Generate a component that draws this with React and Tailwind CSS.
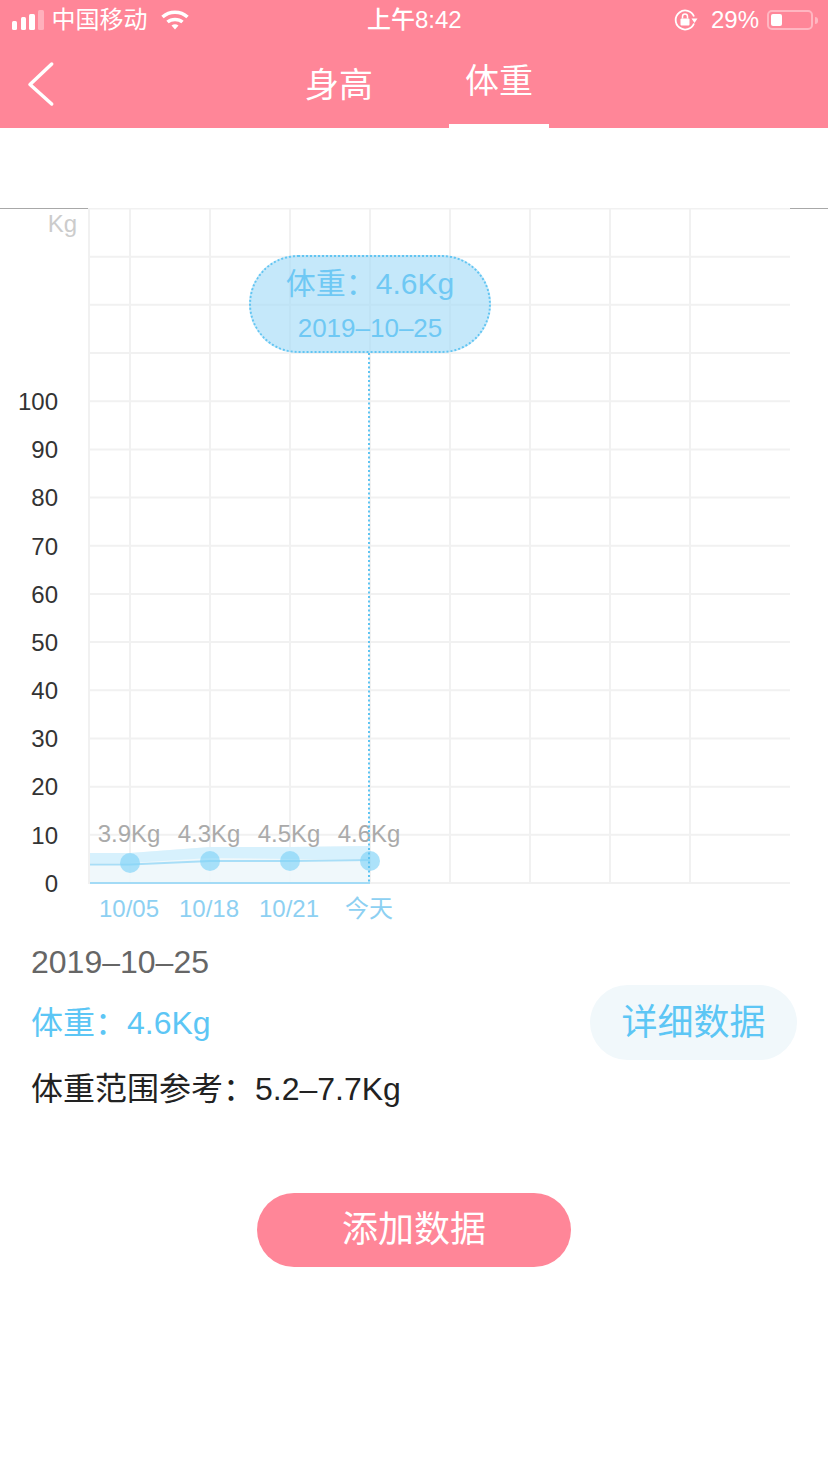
import React from "react";

const yLabels = [100, 90, 80, 70, 60, 50, 40, 30, 20, 10, 0];
const gridY = Array.from({ length: 15 }, (_, i) => 208.5 + i * 48.18);
const gridX = [130, 210, 290, 370, 450, 530, 610, 690];

const points = [
  { x: 130, y: 863, value: "3.9Kg", date: "10/05" },
  { x: 210, y: 861, value: "4.3Kg", date: "10/18" },
  { x: 290, y: 861, value: "4.5Kg", date: "10/21" },
  { x: 370, y: 861, value: "4.6Kg", date: "今天" },
];

const StatusBar = () => {
  return (
    <div className="flex h-10 items-center text-white">
      <div className="flex w-[367px] items-center">
        <div className="ml-3 flex h-5 items-end gap-[3.5px]">
          <div className="h-[9px] w-[5px] rounded-[1.5px] bg-white"></div>
          <div className="h-[13px] w-[5px] rounded-[1.5px] bg-white"></div>
          <div className="h-4 w-[5.5px] rounded-[1.5px] bg-white"></div>
          <div className="h-5 w-[5.5px] rounded-[1.5px] bg-white/35"></div>
        </div>
        <span className="ml-2 text-[24px] leading-none">中国移动</span>
        <svg className="ml-[13px]" width="28" height="20" viewBox="0 0 28 20" fill="none">
          <path d="M1.5 7C8.5 .5 19.5 .5 26.5 7" stroke="white" strokeWidth="3.5" />
          <path d="M6.5 12C10.5 8.5 17.5 8.5 21.5 12" stroke="white" strokeWidth="3.5" />
          <path d="M10.5 15.5Q14 13 17.5 15.5L14 19.5Z" fill="white" />
        </svg>
      </div>
      <span className="w-[103px] text-[24px] leading-none font-medium whitespace-nowrap">上午8:42</span>
      <div className="flex flex-1 items-center justify-end pr-[10px]">
        <svg width="24" height="24" viewBox="0 0 24 24" fill="none">
          <path d="M20 8.5A9.5 9.5 0 1 0 20 15.5" stroke="white" strokeWidth="1.8" />
          <path d="M17.5 10.5H23.5L20.5 15Z" fill="white" />
          <rect x="6.5" y="10.5" width="9" height="7" rx="1" fill="white" />
          <path d="M8.5 10.5V8.5A2.5 2.5 0 0 1 13.5 8.5V10.5" stroke="white" strokeWidth="1.5" />
        </svg>
        <span className="ml-[13px] text-[24px] leading-none">29%</span>
        <div className="ml-2 flex h-5 w-[46px] items-center rounded-[5px] border-2 border-white/40 px-[2px]">
          <div className="h-3 w-[11px] rounded-[2px] bg-white"></div>
        </div>
        <div className="ml-[2px] h-[7px] w-[3px] rounded-r-full bg-white/40"></div>
      </div>
    </div>
  );
};

const NavBar = () => {
  return (
    <div className="flex h-[88px] items-center">
      <div className="w-[289px] pl-[27px]">
        <svg width="28" height="46" viewBox="0 0 28 46" fill="none">
          <path d="M24.7 3 3 23.500 24.700 43" stroke="white" strokeWidth="3.500" strokeLinecap="round" strokeLinejoin="round" />
        </svg>
      </div>
      <div className="flex h-full gap-[60px]">
        <div className="flex w-[100px] items-center justify-center pt-[2px] text-[34px] text-white">身高</div>
        <div className="flex w-[100px] items-center justify-center border-b-4 border-white pb-[2px] text-[34px] text-white">体重</div>
      </div>
    </div>
  );
};

const Chart = () => {
  return (
    <div className="relative h-[731px]">
      <svg className="block" width="828" height="731" viewBox="0 208 828 731">
        <line x1="0" y1="208.500" x2="89" y2="208.500" stroke="#a8a8a8" strokeWidth="1" />
        <line x1="790" y1="208.500" x2="828" y2="208.500" stroke="#a8a8a8" strokeWidth="1" />
        {gridY.map((y) => (
          <line key={y} x1="89" y1={y} x2="790" y2={y} stroke="#f1f1f1" strokeWidth="2" />
        ))}
        <line x1="89" y1="208" x2="89" y2="884" stroke="#f1f1f1" strokeWidth="2" />
        {gridX.map((x) => (
          <line key={x} x1={x} y1="208" x2={x} y2="884" stroke="#f1f1f1" strokeWidth="2" />
        ))}

        <path d="M90 853H130L210 847H290L370 846V883H90Z" fill="#eef7fb" fillOpacity="0.9" />
        <path d="M90 853H130L210 847H290L370 846V859L290 859 210 858 130 863H90Z" fill="#d7f1fd" />
        <path d="M90 864.500H130L210 861H290L370 860" fill="none" stroke="#a8def7" strokeWidth="2" />
        <line x1="90" y1="883" x2="370" y2="883" stroke="#a3dbf6" strokeWidth="2" />
        {points.map((p) => (
          <circle key={p.x} cx={p.x} cy={p.y} r="10" fill="#7fd3f7" fillOpacity="0.65" />
        ))}

        <text x="77" y="232" textAnchor="end" fontSize="24" fill="#cccccc">Kg</text>
        {yLabels.map((label, idx) => (
          <text key={label} x="58" y={410 + idx * 48.18} textAnchor="end" fontSize="24" fill="#333333">
            {label}
          </text>
        ))}
        {points.map((p) => (
          <text key={p.value} x={p.x - 1} y="842" textAnchor="middle" fontSize="24" fill="#aaaaaa">
            {p.value}
          </text>
        ))}
        {points.map((p) => (
          <text key={p.date} x={p.x - 1} y="917" textAnchor="middle" fontSize="24" fill="#8dd0f2">
            {p.date}
          </text>
        ))}
        <line x1="369" y1="353" x2="369" y2="884" stroke="#5ec4f2" strokeWidth="2" strokeDasharray="2 2.500" />
      </svg>

      {/* tooltip */}
      <div className="absolute top-[47px] left-[249px] flex h-[98px] w-[242px] flex-col items-center rounded-[49px] border-2 border-dotted border-[#62c5f2] bg-[#a6dcf7]/65">
        <span className="mt-[6px] text-[30px] leading-[42px] text-[#6fc8f4]">体重：4.6Kg</span>
        <span className="mt-[5px] text-[26px] leading-[36px] text-[#6fc8f4]">2019–10–25</span>
      </div>
    </div>
  );
};

const App = () => {
  return (
    <div className="min-h-[1472px] bg-white font-['Liberation_Sans','Noto_Sans_CJK_SC',sans-serif]">
      <div className="bg-[#ff8698]">
        <StatusBar />
        <NavBar />
      </div>
      <div className="h-20"></div>

      <Chart />

      <div className="pr-[31px] pl-[31px]">
        <div className="flex h-[46px] items-center text-[32px] text-[#666666]">2019–10–25</div>
        <div className="flex h-[75px] items-center justify-between">
          <span className="text-[32px] text-[#5cc6f5]">体重：4.6Kg</span>
          <button className="h-[75px] w-[207px] rounded-[38px] bg-[#f1f8fb] text-[36px] text-[#5cc6f5]">详细数据</button>
        </div>
        <div className="flex h-[58px] items-center text-[32px] text-[#222222]">体重范围参考：5.2–7.7Kg</div>
      </div>

      <div className="mt-[75px] flex justify-center">
        <button className="h-[74px] w-[314px] rounded-[37px] bg-[#ff8698] text-[36px] text-white">添加数据</button>
      </div>
    </div>
  );
};

export default App;
